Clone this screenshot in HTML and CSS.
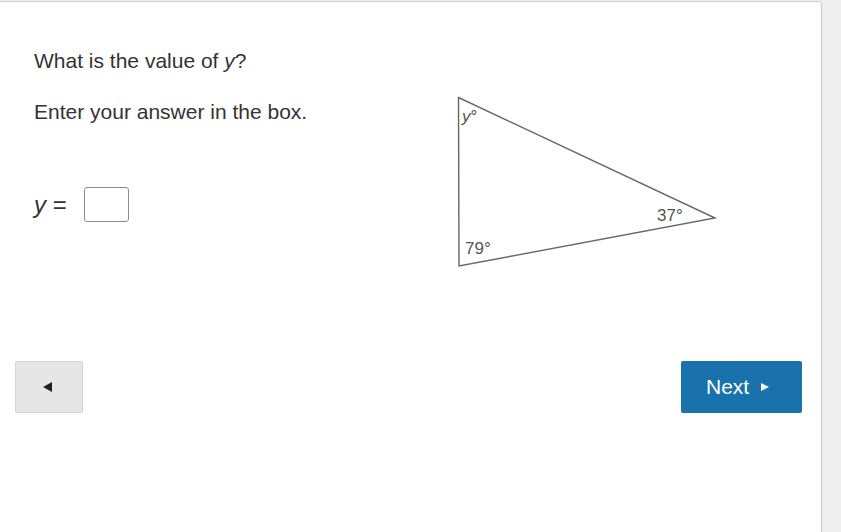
FILE: index.html
```html
<!DOCTYPE html>
<html>
<head>
<meta charset="utf-8">
<link rel="stylesheet" href="styles.css">
</head>
<body>
<div class="card">
  <div class="question">
    <div class="left">
      <p class="prompt">What is the value of <i>y</i>?</p>
      <p class="prompt second">Enter your answer in the box.</p>
      <div class="answer">
        <span class="var"><i>y</i> =</span>
        <span class="box"></span>
      </div>
    </div>
    <svg class="figure" width="290" height="230" viewBox="0 0 290 230">
      <polygon points="18.5,48.5 275,169 19,217" fill="none" stroke="#666" stroke-width="1.4" stroke-linejoin="miter"/>
      <text x="22" y="73" class="lbl"><tspan font-style="italic">y</tspan>°</text>
      <text x="217" y="172" class="lbl">37°</text>
      <text x="25" y="205" class="lbl">79°</text>
    </svg>
  </div>
  <div class="nav">
    <button class="back"><span class="tri-left"></span></button>
    <button class="next">Next <span class="tri-right"></span></button>
  </div>
</div>
</body>
</html>
```
FILE: styles.css
```css
html, body {
  margin: 0;
  padding: 0;
  background: #eeeeee;
  height: 100%;
}
body {
  font-family: "Liberation Sans", Arial, sans-serif;
  color: #333;
}
.card {
  margin-top: 1px;
  width: 822px;
  height: 531px;
  box-sizing: border-box;
  background: #fff;
  border-top: 1px solid #cfcfcf;
  border-right: 1px solid #c8c8c8;
  border-top-right-radius: 4px;
  padding: 47px 19px 0 15px;
}
.question {
  display: flex;
  align-items: flex-start;
}
.left {
  width: 406px;
  padding-left: 19px;
  padding-top: 0;
}
.prompt {
  margin: 0;
  font-size: 21px;
  line-height: 24px;
}
.prompt.second {
  margin-top: 27px;
}
.answer {
  margin-top: 63px;
  display: flex;
  align-items: center;
  height: 35px;
}
.var {
  font-size: 24px;
  line-height: 24px;
}
.box {
  margin-left: 17px;
  width: 43px;
  height: 33px;
  border: 1px solid #8c8c8c;
  border-radius: 3px;
  box-sizing: content-box;
}
.figure {
  display: block;
}
.lbl {
  font-family: "Liberation Sans", Arial, sans-serif;
  font-size: 17px;
  fill: #555;
}
.nav {
  margin-top: 82px;
  display: flex;
  justify-content: space-between;
}
button {
  font-family: "Liberation Sans", Arial, sans-serif;
  cursor: pointer;
}
.back {
  width: 68px;
  height: 52px;
  background: #e6e6e6;
  border: 1px solid #d4d4d4;
  border-radius: 2px;
  display: flex;
  align-items: center;
  justify-content: center;
  padding: 0;
}
.tri-left {
  width: 0;
  height: 0;
  border-top: 5px solid transparent;
  border-bottom: 5px solid transparent;
  border-right: 9px solid #222;
  margin-left: -3px;
}
.next {
  width: 121px;
  height: 52px;
  background: #1a72ad;
  border: none;
  border-radius: 2px;
  color: #fff;
  font-size: 21px;
  display: flex;
  align-items: center;
  justify-content: flex-start;
  gap: 12px;
  padding: 0 0 0 25px;
}
.tri-right {
  width: 0;
  height: 0;
  border-top: 4.5px solid transparent;
  border-bottom: 4.5px solid transparent;
  border-left: 8px solid #fff;
}
```
